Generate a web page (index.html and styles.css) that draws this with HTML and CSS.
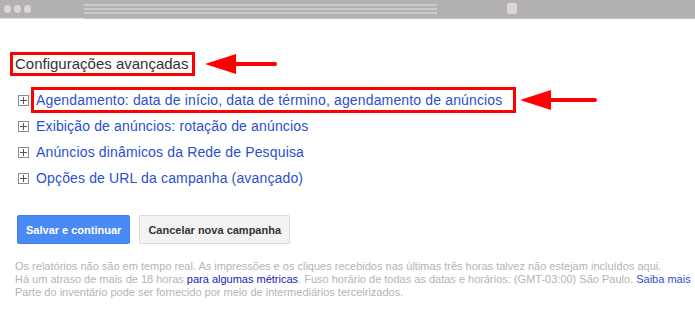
FILE: index.html
```html
<!DOCTYPE html>
<html lang="pt-BR">
<head>
<meta charset="UTF-8" />
<title>Configurações avançadas</title>
<link rel="stylesheet" href="styles.css">
</head>
<body>

<div class="chrome">
  <div class="dots"><span></span><span></span><span></span></div>
  <div class="address"><i></i><i></i><i></i></div>
  <div class="menu-btn"></div>
</div>

<div class="page">
  <div class="heading-row">
    <h2 class="mark">Configurações avançadas</h2>
    <svg class="arrow arrow-1" width="73" height="22" viewBox="0 0 73 22">
      <path d="M70 11 H28" stroke="#f00" stroke-width="4" stroke-linecap="round"/>
      <path d="M0 11 L31 1 L31 21 Z" fill="#f00"/>
    </svg>
  </div>

  <ul class="sections">
    <li class="marked">
      <span class="plus"></span>
      <a class="label mark" href="#">Agendamento: data de início, data de término, agendamento de anúncios</a>
      <svg class="arrow arrow-2" width="78" height="22" viewBox="0 0 78 22">
        <path d="M75 11 H28" stroke="#f00" stroke-width="4" stroke-linecap="round"/>
        <path d="M0 11 L31 1 L31 21 Z" fill="#f00"/>
      </svg>
    </li>
    <li><span class="plus"></span><a class="label" href="#">Exibição de anúncios: rotação de anúncios</a></li>
    <li><span class="plus"></span><a class="label" href="#">Anúncios dinâmicos da Rede de Pesquisa</a></li>
    <li><span class="plus"></span><a class="label" href="#">Opções de URL da campanha (avançado)</a></li>
  </ul>

  <div class="actions">
    <button class="btn btn-primary">Salvar e continuar</button>
    <button class="btn">Cancelar nova campanha</button>
  </div>

  <p class="note">
    Os relatórios não são em tempo real. As impressões e os cliques recebidos nas últimas três horas talvez não estejam incluídos aqui.<br>
    Há um atraso de mais de 18 horas <a class="dark" href="#">para algumas métricas</a>. Fuso horário de todas as datas e horários: (GMT-03:00) São Paulo. <a href="#">Saiba mais</a><br>
    Parte do inventário pode ser fornecido por meio de intermediários terceirizados.
  </p>
</div>

</body>
</html>
```

FILE: styles.css
```css
body {
  margin: 0;
  font-family: "Liberation Sans", Arial, sans-serif;
  background: #fff;
  color: #333;
}
.chrome {
  height: 18px;
  background: #b3b1af;
  border-bottom: 1px solid #c4c2c0;
  display: flex;
  align-items: flex-start;
  position: relative;
}
.chrome::after {
  content: "";
  position: absolute;
  left: 0;
  bottom: -1px;
  width: 84px;
  height: 1px;
  background: #e2dfdc;
}
.dots {
  width: 84px;
  display: flex;
  gap: 3px;
  padding: 5px 0 0 4px;
  box-sizing: border-box;
}
.dots span {
  width: 7px;
  height: 8px;
  border-radius: 50%;
  background: #dcd6d6;
}
.address {
  width: 353px;
  display: flex;
  flex-direction: column;
  gap: 2px;
  padding-top: 4px;
}
.address i {
  display: block;
  height: 2px;
  background: #cdcbc9;
}
.menu-btn {
  width: 10px;
  height: 11px;
  margin: 3px 0 0 70px;
  border-radius: 2px;
  background: #dcd6d6;
}
.page {
  padding: 33px 0 0 10px;
}
.heading-row {
  display: flex;
  align-items: center;
}
.mark {
  border: 3px solid #f00;
}
h2.mark {
  margin: 0;
  font-size: 15px;
  font-weight: normal;
  line-height: 18px;
  padding: 0 4px 0 2px;
  color: #333;
}
.arrow-1 {
  margin-left: 10px;
}
.sections {
  list-style: none;
  margin: 11px 0 0;
  padding: 0 0 0 8px;
}
.sections li {
  display: flex;
  align-items: center;
  height: 26px;
}
.sections li:first-child {
  margin-top: 1px;
}
.plus {
  width: 9px;
  height: 9px;
  border: 1px solid #8c8c8c;
  margin-right: 2px;
  position: relative;
  flex: none;
}
.plus::before,
.plus::after {
  content: "";
  position: absolute;
  background: #555;
}
.plus::before {
  left: 1px;
  right: 1px;
  top: 4px;
  height: 1px;
}
.plus::after {
  top: 1px;
  bottom: 1px;
  left: 4px;
  width: 1px;
}
.label {
  font-size: 14px;
  letter-spacing: 0.15px;
  line-height: 20px;
  color: #2a4fcf;
  text-decoration: none;
  border: 3px solid transparent;
  padding: 0 11px 0 2px;
}
.label.mark {
  border-color: #f00;
}
.arrow-2 {
  margin-left: 4px;
}
.actions {
  display: flex;
  gap: 9px;
  margin: 24px 0 0 7px;
}
.btn {
  font-family: "Liberation Sans", Arial, sans-serif;
  font-size: 11px;
  font-weight: bold;
  height: 29px;
  padding: 0 8px;
  border: 1px solid #d9d9d9;
  border-radius: 2px;
  background: #f3f3f3;
  color: #333;
}
.btn-primary {
  background: #4a8af4;
  border-color: #3f7fe6;
  color: #fff;
}
.note {
  margin: 16px 0 0 5px;
  font-size: 11px;
  line-height: 13px;
  color: #b4b4b4;
}
.note a {
  color: #2a4fcf;
  text-decoration: none;
}
.note a.dark {
  color: #1a22b8;
}
```
